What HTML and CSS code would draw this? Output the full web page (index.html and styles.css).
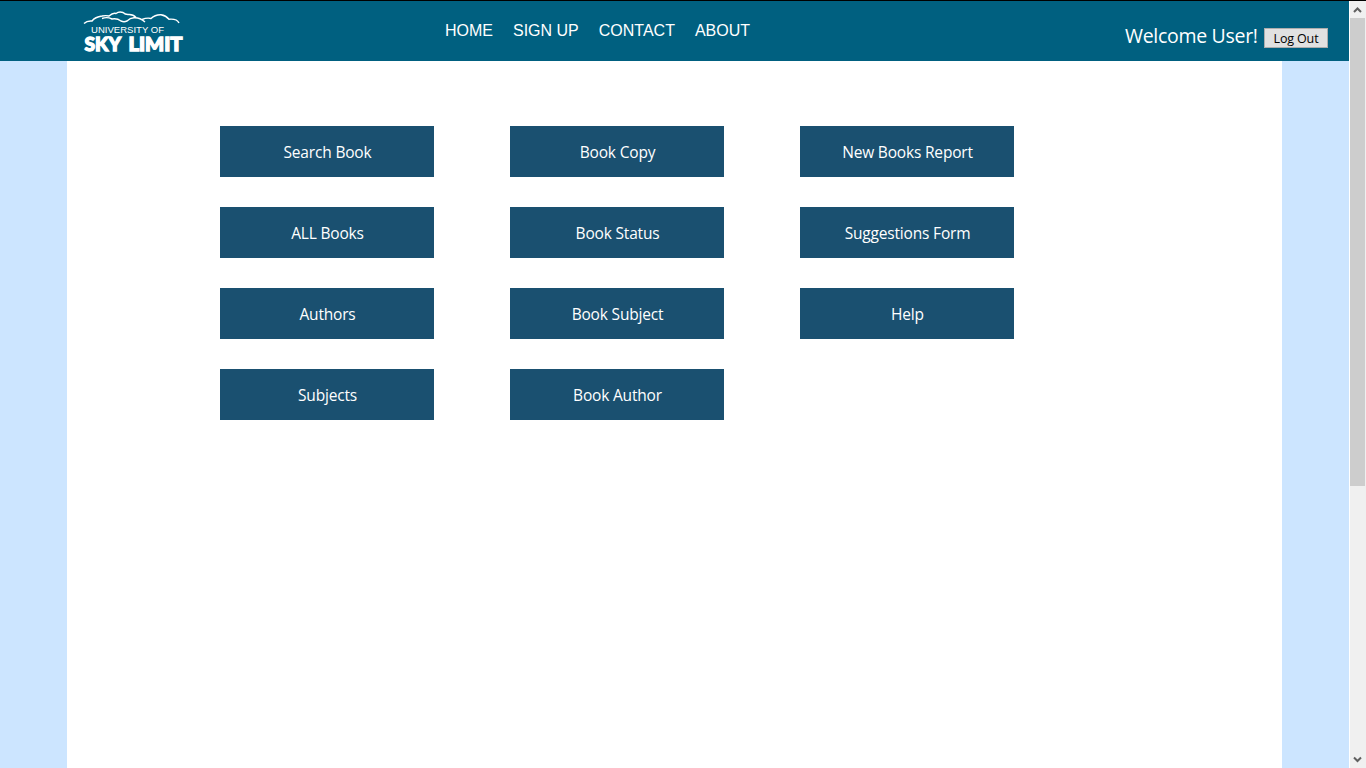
FILE: index.html
```html
<!DOCTYPE html>
<html lang="en">
<head>
<meta charset="utf-8">
<title>University of Sky Limit</title>
<link rel="stylesheet" href="styles.css">
</head>
<body>
<div class="window">
  <div class="page">
    <header class="header">
      <svg class="logo" width="104" height="46" viewBox="0 0 104 46" role="img" aria-label="University of Sky Limit">
        <g class="mountains">
          <path d="M2 15.500Q5 12.500 10 13Q13 9 20 8Q24 7.200 27 8Q31 4.500 34 5.500Q37 3 41 4.500Q43 6.500 46 6.500Q51 6 54 9.500"/>
          <path d="M20 10.500Q25 8.500 30 11Q35 10 39 13Q42 14.500 45 13Q48 10 52 9.800Q58 9.500 63 14"/>
          <path d="M60 11.500Q65 9.500 69 10.500Q73 6.500 79 6.700Q84 7.500 87 11.200Q95 10.500 97 15"/>
        </g>
        <text class="logo-top" x="9" y="25" textLength="73" lengthAdjust="spacingAndGlyphs">UNIVERSITY OF</text>
        <text class="logo-main" x="2.500" y="42.500" textLength="36.500" lengthAdjust="spacingAndGlyphs">SKY</text>
        <text class="logo-main" x="46.500" y="42.500" textLength="54" lengthAdjust="spacingAndGlyphs">LIMIT</text>
      </svg>
      <nav class="nav">
        <a>HOME</a><a>SIGN UP</a><a>CONTACT</a><a>ABOUT</a>
      </nav>
      <div class="user">
        <span class="welcome">Welcome User!</span>
        <button class="logout">Log Out</button>
      </div>
    </header>
    <main class="content">
      <div class="menu">
        <a class="tile">Search Book</a><a class="tile">Book Copy</a><a class="tile">New Books Report</a>
        <a class="tile">ALL Books</a><a class="tile">Book Status</a><a class="tile">Suggestions Form</a>
        <a class="tile">Authors</a><a class="tile">Book Subject</a><a class="tile">Help</a>
        <a class="tile">Subjects</a><a class="tile">Book Author</a>
      </div>
    </main>
  </div>
  <div class="scrollbar">
    <svg class="arrow" width="15" height="17" viewBox="0 0 15 17"><path d="M4 11L7.500 7.500L11 11"/></svg>
    <div class="thumb"></div>
    <svg class="arrow arrow-down" width="15" height="17" viewBox="0 0 15 17"><path d="M4 6.500L7.500 10L11 6.500"/></svg>
  </div>
</div>
</body>
</html>
```

FILE: styles.css
```css
* { box-sizing: border-box; }
body {
  margin: 0;
  font-family: "Open Sans", "Noto Sans", sans-serif;
  overflow: hidden;
}
.window {
  display: flex;
  height: 768px;
  border-top: 1px solid #000;
}
.page {
  display: flex;
  flex-direction: column;
  width: 1349px;
  background: #cce5ff;
}
.header {
  display: flex;
  height: 60px;
  padding-left: 82px;
  padding-right: 21px;
  background: #006080;
  color: #fff;
}
.logo { margin-top: 7px; flex: none; }
.mountains { fill: none; stroke: #fff; stroke-width: 1.4; }
.logo-top { font: 9px "Liberation Sans", sans-serif; fill: #fff; }
.logo-main {
  font: 900 18.5px Lato, sans-serif;
  fill: #fff;
  stroke: #fff;
  stroke-width: 1.3;
}
.nav {
  display: flex;
  gap: 20px;
  margin-left: 259px;
  font: 16px/18px "Liberation Sans", sans-serif;
  padding-top: 21px;
}
.user {
  display: flex;
  margin-left: auto;
  padding-top: 20px;
}
.welcome {
  width: 139px;
  font-size: 19.5px;
  letter-spacing: -0.3px;
  line-height: 30px;
  white-space: nowrap;
}
.logout {
  width: 64px;
  height: 20px;
  margin-top: 7px;
  padding: 1px 0 0;
  border: 1px solid #adadad;
  background: #e1e1e1;
  color: #000;
  font: 12.5px/17px "Open Sans", sans-serif;
  letter-spacing: -0.15px;
}
.content {
  flex: 1;
  width: 1215px;
  margin-left: 67px;
  padding: 65px 153px;
  background: #fff;
}
.menu {
  display: grid;
  grid-template-columns: repeat(3, 214px);
  gap: 30px 76px;
}
.tile {
  height: 51px;
  padding-left: 1px;
  background: #1a5070;
  color: #fff;
  font-size: 15.5px;
  letter-spacing: -0.18px;
  line-height: 52px;
  text-align: center;
}
.scrollbar {
  display: flex;
  flex-direction: column;
  width: 17px;
  padding-right: 1px;
  border-left: 1px solid #fff;
  background: #f0f0f0;
}
.arrow { fill: none; stroke: #606060; stroke-width: 2; flex: none; }
.thumb { height: 468px; background: #cdcdcd; }
.arrow-down { margin-top: auto; }
```
